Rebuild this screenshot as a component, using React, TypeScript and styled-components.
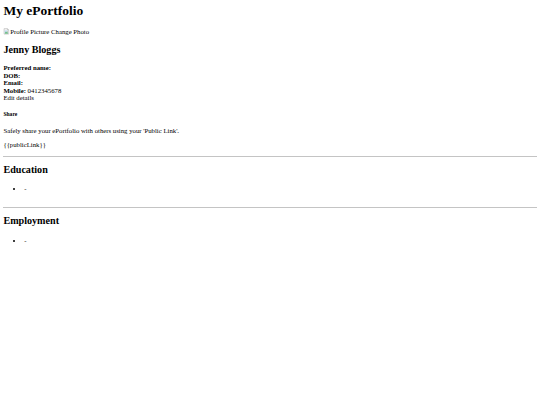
import React from "react";
import styled, { createGlobalStyle } from "styled-components";

const GlobalStyle = createGlobalStyle`
  html {
    background: #ffffff;
  }
  body {
    margin: 3.4px;
    font-family: "Liberation Serif", "Times New Roman", serif;
    font-size: 6.75px;
    line-height: 7.5px;
    color: #000000;
    background: #ffffff;
  }
`;

const Page = styled.main`
  display: flow-root;
`;

const Title = styled.h1`
  font-size: 13.5px;
  line-height: 15.5px;
  font-weight: bold;
  margin: 0 0 9px;
`;

const PhotoRow = styled.div`
  line-height: 7.75px;
`;

const BrokenIcon = styled.svg`
  width: 6.75px;
  height: 6.75px;
  vertical-align: -1px;
`;

const Name = styled.h2`
  font-size: 10.125px;
  line-height: 11.6px;
  font-weight: bold;
  margin: 8.4px 0;
`;

const Details = styled.div`
  display: flex;
  flex-direction: column;
`;

const DetailLine = styled.div`
  line-height: 7.5px;
`;

const Label = styled.b`
  font-weight: bold;
`;

const SubHeading = styled.h5`
  font-size: 5.6px;
  line-height: 6.4px;
  font-weight: bold;
  margin: 9.35px 0;
`;

const Text = styled.p`
  margin: 6.75px 0;
  line-height: 7.5px;
`;

const Divider = styled.hr`
  margin: 8px 0 0;
  border: 0;
  border-top: 1px solid #c4c4c4;
  height: 0;
`;

const SectionTitle = styled.h2`
  font-size: 10.125px;
  line-height: 11.6px;
  font-weight: bold;
  margin: 7px 0 8.4px;
`;

const List = styled.ul<{ $trail?: boolean }>`
  margin: 9.5px 0 ${(p) => (p.$trail ? "14.5px" : "6.75px")};
  padding-left: 20.9px;
  list-style: disc;
`;

const Item = styled.li`
  line-height: 7.5px;
`;

function BrokenImage() {
  return (
    <BrokenIcon viewBox="0 0 16 16" aria-hidden="true">
      <path d="M2.5 1.5h8l3 3v10h-11z" fill="#f4f4f4" stroke="#9a9a9a" />
      <path d="M10.5 1.5v3h3" fill="none" stroke="#9a9a9a" />
      <rect x="4" y="6" width="8" height="7" fill="#b9d8f0" />
      <path d="M4 13l3-4 2 2.5 1.5-1.5 1.5 3z" fill="#4caf50" />
      <circle cx="10" cy="8" r="1" fill="#f2c94c" />
    </BrokenIcon>
  );
}

export default function App() {
  return (
    <>
      <GlobalStyle />
      <Page>
        <Title>My ePortfolio</Title>
        <PhotoRow>
          <BrokenImage />
          <span>Profile Picture</span> <span>Change Photo</span>
        </PhotoRow>
        <Name>Jenny Bloggs</Name>
        <Details>
          <DetailLine>
            <Label>Preferred name:</Label>
          </DetailLine>
          <DetailLine>
            <Label>DOB:</Label>
          </DetailLine>
          <DetailLine>
            <Label>Email:</Label>
          </DetailLine>
          <DetailLine>
            <Label>Mobile:</Label> 0412345678
          </DetailLine>
          <DetailLine>Edit details</DetailLine>
        </Details>
        <SubHeading>Share</SubHeading>
        <Text>Safely share your ePortfolio with others using your 'Public Link'.</Text>
        <Text>{"{{publicLink}}"}</Text>
        <Divider />
        <SectionTitle>Education</SectionTitle>
        <List $trail>
          <Item>-</Item>
        </List>
        <Divider />
        <SectionTitle>Employment</SectionTitle>
        <List>
          <Item>-</Item>
        </List>
      </Page>
    </>
  );
}
